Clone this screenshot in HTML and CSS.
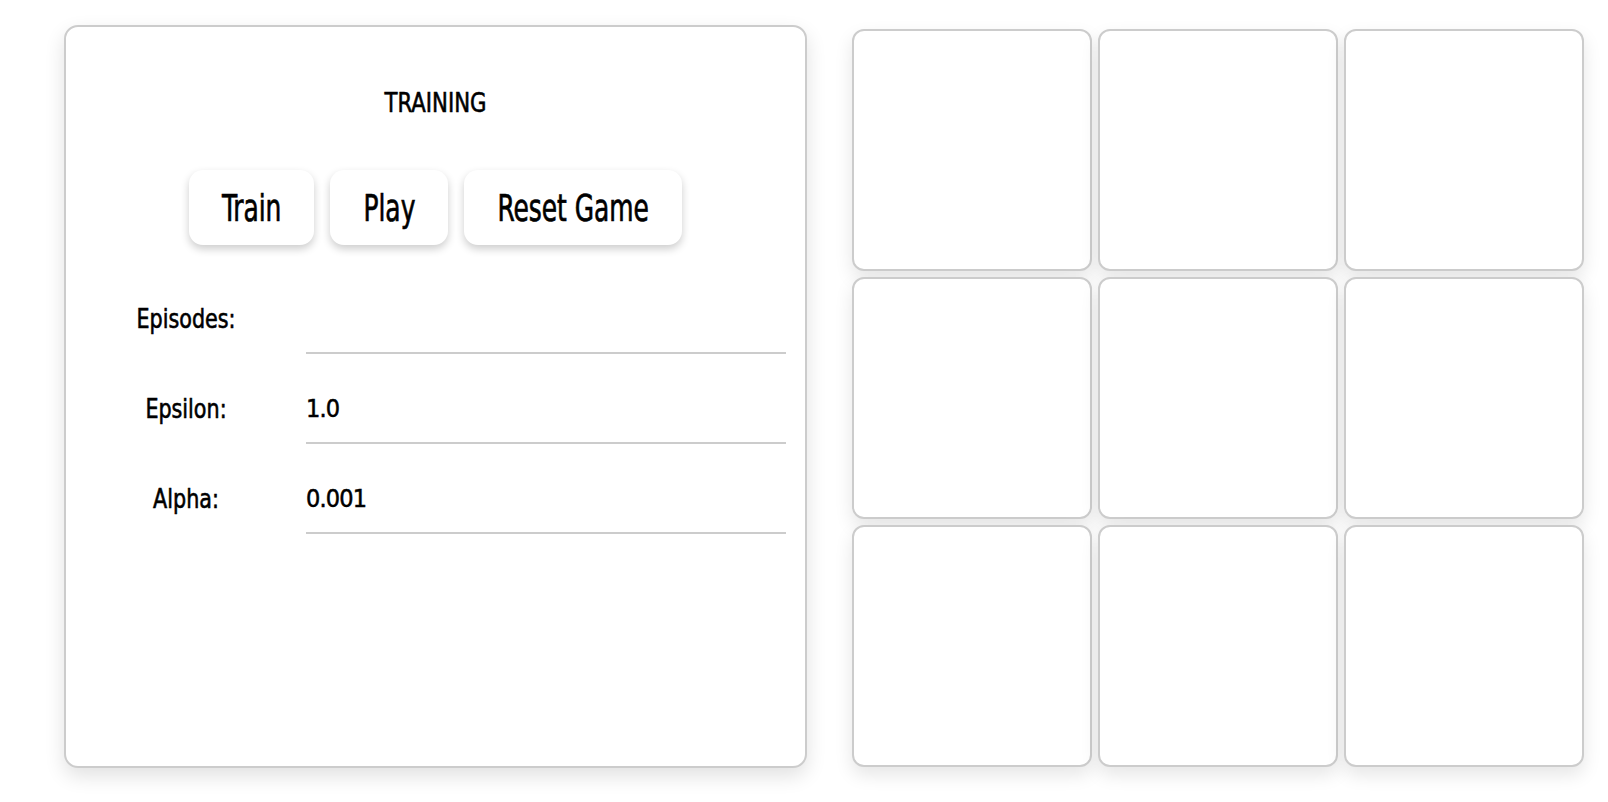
FILE: index.html
```html
<!DOCTYPE html>
<html lang="en">
<head>
<meta charset="utf-8">
<title>Training</title>
<link rel="stylesheet" href="styles.css">
</head>
<body>
<main class="page">
  <section class="panel">
    <h1 class="title"><span class="tall">TRAINING</span></h1>
    <div class="actions">
      <button class="btn" type="button"><span class="btn-text">Train</span></button>
      <button class="btn" type="button"><span class="btn-text">Play</span></button>
      <button class="btn" type="button"><span class="btn-text">Reset Game</span></button>
    </div>
    <form class="form">
      <label class="label" for="episodes">Episodes:</label>
      <input class="field" id="episodes" type="text" value="">
      <label class="label" for="epsilon">Epsilon:</label>
      <input class="field" id="epsilon" type="text" value="1.0">
      <label class="label" for="alpha">Alpha:</label>
      <input class="field" id="alpha" type="text" value="0.001">
    </form>
  </section>
  <section class="board">
    <div class="cell"></div>
    <div class="cell"></div>
    <div class="cell"></div>
    <div class="cell"></div>
    <div class="cell"></div>
    <div class="cell"></div>
    <div class="cell"></div>
    <div class="cell"></div>
    <div class="cell"></div>
  </section>
</main>
</body>
</html>
```

FILE: styles.css
```css
* {
  box-sizing: border-box;
}

html, body {
  margin: 0;
  padding: 0;
  background: #ffffff;
}

body {
  font-family: "DejaVu Sans Condensed", "Liberation Sans", sans-serif;
  color: #000;
  -webkit-text-stroke: 0.5px #000;
}

.page {
  display: flex;
  align-items: flex-end;
  gap: 45px;
  height: 802px;
  padding: 0 0 34px 64px;
}

.panel {
  width: 743px;
  height: 743px;
  flex: none;
  background: #fff;
  border: 2px solid #cccccc;
  border-radius: 14px;
  box-shadow: 0 8px 20px rgba(0, 0, 0, 0.12);
  padding-top: 61px;
}

.title {
  margin: 0;
  text-align: center;
  font-size: 23.6px;
  line-height: 30px;
  font-weight: normal;
}

.tall {
  display: inline-block;
  transform: scaleY(1.16);
}

.actions {
  display: flex;
  justify-content: center;
  gap: 16px;
  margin-top: 52px;
}

.btn {
  display: flex;
  align-items: center;
  justify-content: center;
  height: 75px;
  padding: 0 33px;
  border: none;
  border-radius: 14px;
  background: #fff;
  box-shadow: 0 4px 8px rgba(0, 0, 0, 0.2);
  font-family: inherit;
  font-size: 27.7px;
  color: #000;
}

.btn-text {
  display: inline-block;
  transform: scaleY(1.34);
  margin-top: 2px;
}

.form {
  display: grid;
  grid-template-columns: 240px 480px;
  grid-auto-rows: 72px;
  row-gap: 18px;
  align-items: center;
  margin-top: 37px;
}

.label {
  text-align: center;
  font-size: 23px;
  margin-top: 2px;
  transform: scaleY(1.16);
}

.field {
  height: 72px;
  width: 480px;
  padding: 2px 0 0;
  border: none;
  border-bottom: 2px solid #cccccc;
  border-radius: 0;
  background: transparent;
  outline: none;
  font-family: inherit;
  font-size: 25px;
  letter-spacing: -0.8px;
  color: #000;
  -webkit-text-stroke: 0.5px #000;
}

.board {
  display: grid;
  grid-template-columns: repeat(3, 240px);
  grid-template-rows: repeat(3, 242px);
  gap: 6px;
  flex: none;
  margin-bottom: 1px;
}

.cell {
  background: #fff;
  border: 2px solid #cccccc;
  border-radius: 12px;
  box-shadow: 0 8px 18px rgba(0, 0, 0, 0.1);
}
```
